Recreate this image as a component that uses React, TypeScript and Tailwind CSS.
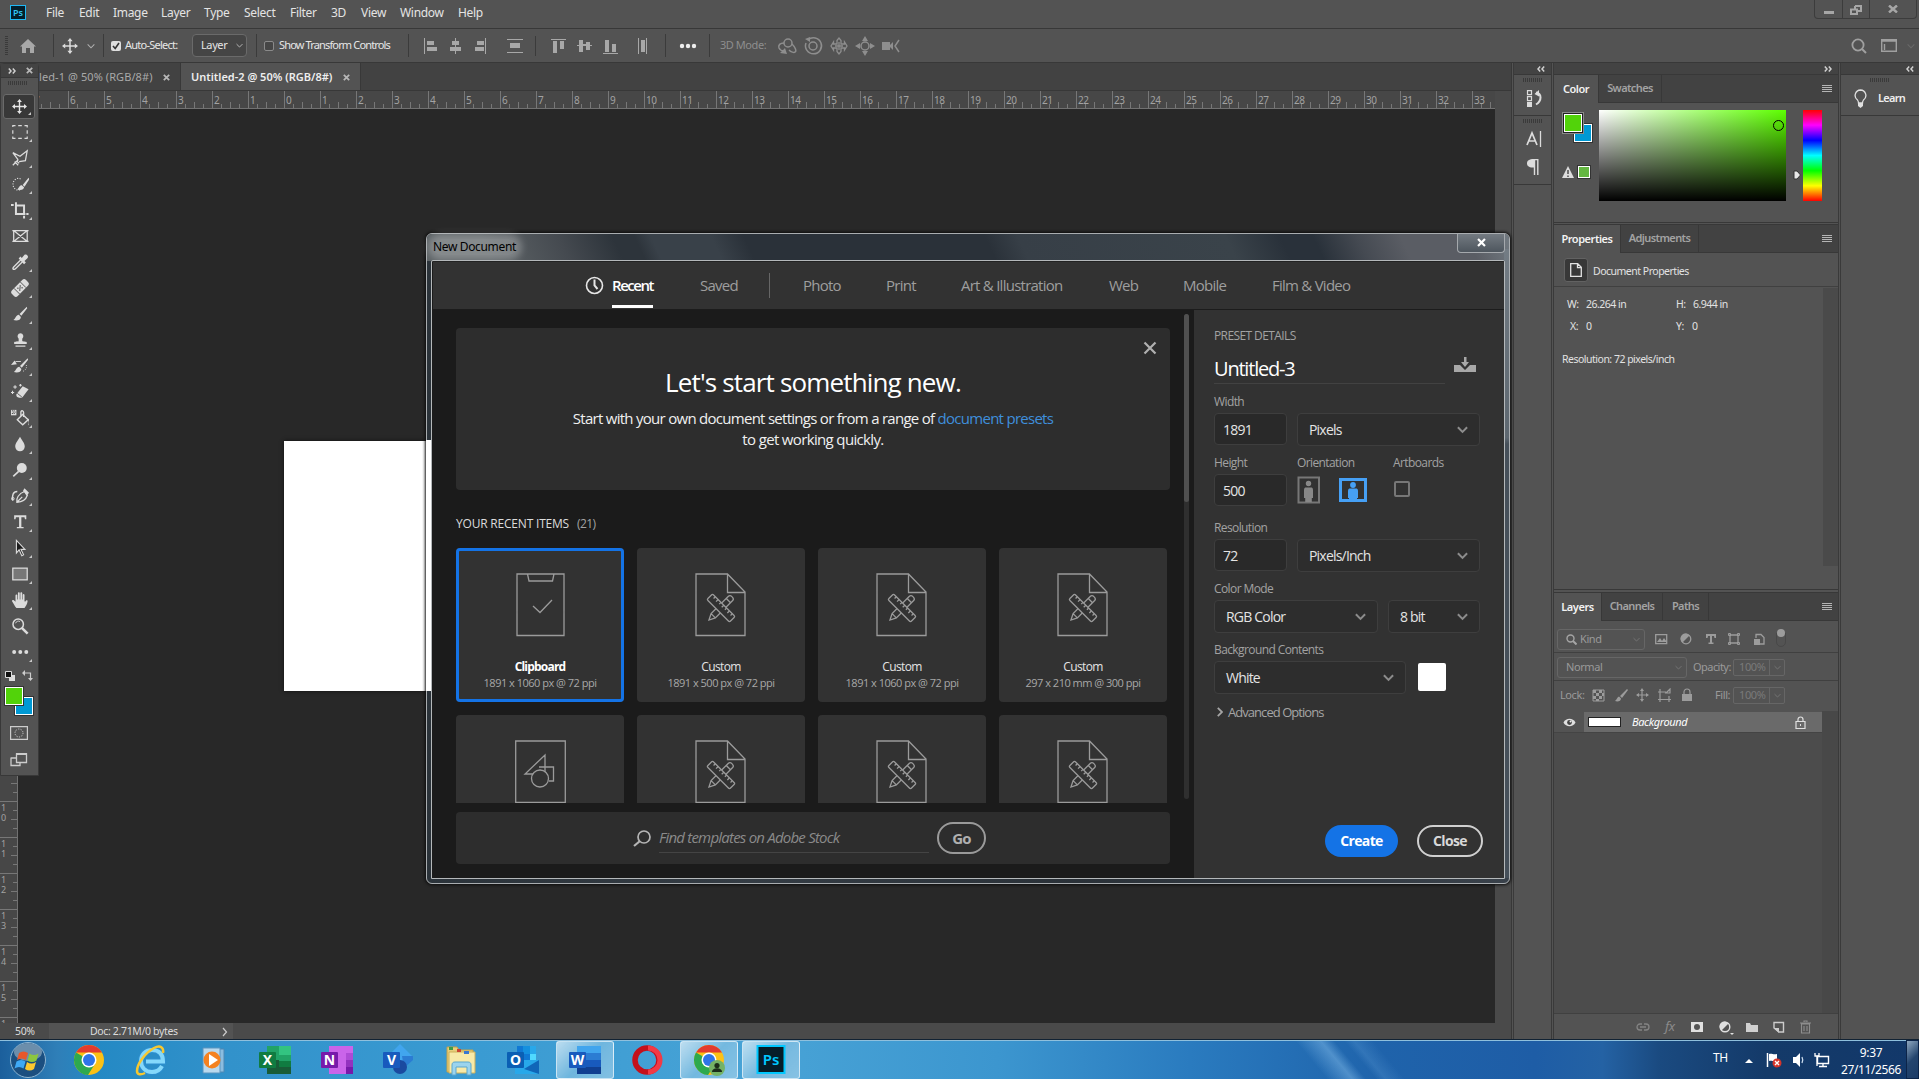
import React from "react";

type Kids = { children?: React.ReactNode };

const Svg = ({ w, h, vb, cls = "", children }: { w: number; h: number; vb?: string; cls?: string } & Kids) => (
  <svg width={w} height={h} viewBox={vb ?? `0 0 ${w} ${h}`} className={"block shrink-0 " + cls} fill="none">
    {children}
  </svg>
);

/* ---------- shared bits ---------- */
const Grip = () => (
  <div className="flex h-1 w-[19px] gap-px">
    {Array.from({ length: 10 }, (_, i) => (
      <span key={i} className="h-1 w-px bg-[#3a3a3a]" />
    ))}
  </div>
);
const Arrows = ({ left }: { left?: boolean }) => (
  <Svg w={8} h={6} cls={left ? "rotate-180" : ""}>
    <path d="M.8.6 3 3 .8 5.4M4.8.6 7 3 4.8 5.4" stroke="#d0d0d0" strokeWidth="1.5" />
  </Svg>
);
const Chevron = ({ c = "#a0a0a0", s = 10, sw = 1.3 }: { c?: string; s?: number; sw?: number }) => (
  <Svg w={s} h={s} vb="0 0 10 10">
    <path d="M.8 3 5 7.2 9.2 3" stroke={c} strokeWidth={sw} />
  </Svg>
);
const MoveGlyph = ({ c = "#dcdcdc", s = 16 }: { c?: string; s?: number }) => (
  <Svg w={s} h={s} vb="0 0 16 16">
    <path d="M8 2v12M2 8h12" stroke={c} strokeWidth="1.5" />
    <path d="M8 0l2.6 3.2H5.4zM8 16l2.6-3.2H5.4zM0 8l3.2-2.6v5.2zM16 8l-3.2-2.6v5.2z" fill={c} />
  </Svg>
);
const Burger = () => (
  <div className="flex w-[10px] flex-col gap-px">
    <span className="h-px bg-[#b5b5b5]" />
    <span className="h-px bg-[#b5b5b5]" />
    <span className="h-px bg-[#b5b5b5]" />
    <span className="h-px bg-[#b5b5b5]" />
  </div>
);

/* ---------- menu + options ---------- */
const MenuBar = () => (
  <div className="flex h-[29px] shrink-0 items-start border-b border-[#383838] bg-[#535353]">
    <div className="mt-[5px] ml-[10px] flex h-[15px] w-4 items-center justify-center border border-[#1fb8f5] bg-[#031e2b] text-[9px] leading-none font-semibold text-[#31c5f4]">
      Ps
    </div>
    <div className="ml-5 flex h-[25px] items-center text-[12px] tracking-[-0.3px] whitespace-nowrap text-[#e4e4e4]">
      <span className="w-[33px]">File</span>
      <span className="w-[34px]">Edit</span>
      <span className="w-[48px]">Image</span>
      <span className="w-[43px]">Layer</span>
      <span className="w-[40px]">Type</span>
      <span className="w-[46px]">Select</span>
      <span className="w-[41px]">Filter</span>
      <span className="w-[30px]">3D</span>
      <span className="w-[39px]">View</span>
      <span className="w-[58px]">Window</span>
      <span>Help</span>
    </div>
    <div className="mr-[2px] ml-auto flex h-[19px] w-[103px] rounded-b border border-t-0 border-[#3c3c3c]">
      <div className="flex w-7 justify-center border-r border-[#3c3c3c] pt-[11px]">
        <span className="h-[3px] w-[10px] bg-[#a6a6a6]" />
      </div>
      <div className="flex w-[27px] justify-center border-r border-[#3c3c3c] pt-[5px]">
        <Svg w={12} h={10}>
          <path d="M5 1h6v5H8M5 1v3M1 4.5h6V9H1z" stroke="#a6a6a6" strokeWidth="2" />
        </Svg>
      </div>
      <div className="flex flex-1 justify-center pt-[5px]">
        <Svg w={10} h={8}>
          <path d="M1 .5 9 7.5M9 .5 1 7.5" stroke="#a6a6a6" strokeWidth="2.4" />
        </Svg>
      </div>
    </div>
  </div>
);

const Sep = ({ cls = "" }: { cls?: string }) => <span className={"h-[23px] w-px shrink-0 bg-[#3b3b3b] " + cls} />;

const OptionsBar = () => (
  <div className="flex h-[34px] shrink-0 items-center border-b border-[#383838] bg-[#535353] text-[11px] tracking-[-0.75px] whitespace-nowrap text-[#e6e6e6]">
    <div className="ml-[5px] flex w-[3px] flex-col gap-px">
      {Array.from({ length: 10 }, (_, i) => (
        <span key={i} className="h-px bg-[#3a3a3a]" />
      ))}
    </div>
    <Svg w={18} h={16} cls="ml-[11px]">
      <path d="M9 1 17 8.5h-2V15h-4v-5H7v5H3V8.500H1z" fill="#a8a8a8" />
    </Svg>
    <Sep cls="ml-[16px]" />
    <div className="ml-[8px]">
      <MoveGlyph />
    </div>
    <div className="ml-[9px]">
      <Chevron c="#b0b0b0" s={8} />
    </div>
    <Sep cls="ml-[8px]" />
    <div className="ml-[7px] flex h-[10px] w-[10px] items-center justify-center rounded-[2px] bg-[#dedede]">
      <Svg w={8} h={8}>
        <path d="M1 4l2.200 2.500L7 1" stroke="#333" strokeWidth="1.600" />
      </Svg>
    </div>
    <span className="ml-[4px] w-[67px]">Auto-Select:</span>
    <div className="flex h-[23px] w-[55px] items-center rounded border border-[#6a6a6a] bg-[#454545] pl-2">
      <span className="flex-1 tracking-[-0.4px]">Layer</span>
      <div className="mr-[3px]">
        <Chevron c="#c0c0c0" s={7} />
      </div>
    </div>
    <Sep cls="ml-[9px]" />
    <span className="ml-[7px] h-[10px] w-[10px] rounded-[2px] border border-[#8a8a8a] bg-[#464646]" />
    <span className="ml-[5px] w-[129px] tracking-[-0.85px]">Show Transform Controls</span>
    <Sep />
    <Svg w={226} h={20} cls="ml-[12px]">
      <g fill="#a8a8a8">
        <path d="M3 2h1v16H3zM6 5h7v4H6zM6 11h10v4H6zM34 2h1v3h3v4h-3v2h5v4h-5v3h-1v-3h-5v-4h5V9h-3V5h3zM64 2h1v16h-1zM56 5h7v4h-7zM54 11h9v4h-9zM86 3h16v1H86zM89 7h10v5H89zM86 16h16v1H86zM130 3h15v1h-15zM132 5h4v12h-4zM139 5h4v8h-4zM158 4h4v4h3V6h4v3h2v1h-2v4h-4V10h-3v6h-4v-6h-2V9h2zM182 17h15v1h-15zM184 4h4v12h-4zM191 8h4v8h-4zM217 2h1v16h-1zM220 4h4v12h-4zM225 2h1v16h-1z" />
      </g>
      <path d="M114.500 0v20" stroke="#3b3b3b" />
    </Svg>
    <Sep cls="ml-[18px]" />
    <Svg w={18} h={6} cls="ml-[13px]">
      <g fill="#ededed">
        <circle cx="3" cy="3" r="2.200" />
        <circle cx="9" cy="3" r="2.200" />
        <circle cx="15" cy="3" r="2.200" />
      </g>
    </Svg>
    <Sep cls="ml-[12px]" />
    <span className="ml-[10px] w-[56px] tracking-[-0.45px] text-[#8e8e8e]">3D Mode:</span>
    <Svg w={126} h={20}>
      <g stroke="#8e8e8e" strokeWidth="1.500">
        <circle cx="12" cy="7" r="4" />
        <path d="M8 7c-4 0-6 2-5 5 1 2 3 3 5 3M16 8c3 3 5 7 3 8-1 1-4 0-6-2" />
        <circle cx="37" cy="10" r="4" />
        <path d="M32 4a8 8 0 1 1-2 3" />
        <path d="M61 4.500 63 2l2 2.500V8h3.500V6L71 10l-2.500 4v-2H65v3.500L63 18l-2-2.500V12h-3.500v2L55 10l2.500-4v2H61z" strokeWidth="1.300" />
        <path d="M63 6v8M59 10h8" strokeWidth="1.300" />
        <circle cx="89" cy="10" r="4" />
        <path d="M123 4l-4 6 4 6" />
      </g>
      <g fill="#8e8e8e">
        <path d="M4 17l5-5 2 6zM29 3l5-2v5zM89 0l3 5h-6zM89 20l3-5h-6zM79 10l5-3v6zM99 10l-5-3v6zM106 6h8v8h-8zM113 10l4-4v8z" />
      </g>
    </Svg>
    <div className="mr-[4px] ml-auto flex items-center">
      <Svg w={16} h={16}>
        <circle cx="7" cy="7" r="5.600" stroke="#a0a0a0" strokeWidth="1.800" />
        <path d="M11 11l4 4" stroke="#a0a0a0" strokeWidth="2" />
      </Svg>
      <Svg w={16} h={13} cls="ml-[14px]">
        <path d="M.7.7h14.600v11.600H.7zM0 2h16M3.500 5v6" stroke="#a0a0a0" strokeWidth="1.400" />
      </Svg>
      <div className="ml-[10px]">
        <Chevron c="#6a6a6a" s={8} />
      </div>
    </div>
  </div>
);

/* ---------- document area ---------- */
const Ruler = () => (
  <div className="relative h-[18px] shrink-0 overflow-hidden border-b border-[#717171] bg-[#474747]">
    <div className="absolute top-0 left-[32px] flex h-[17px]">
      {Array.from({ length: 41 }, (_, i) => (
        <div key={i} className="flex w-9 items-end border-l border-[#777]">
          <span className="w-0 self-start overflow-visible pt-[2px] pl-px text-[10px] leading-[15px] tracking-[-0.4px] whitespace-nowrap text-[#a2a2a2]">
            {Math.abs(i - 7)}
          </span>
          <span className="ml-[7px] h-1 w-px bg-[#777]" />
          <span className="ml-2 h-[6px] w-px bg-[#777]" />
          <span className="ml-2 h-1 w-px bg-[#777]" />
        </div>
      ))}
    </div>
  </div>
);

const VRuler = () => (
  <div className="flex h-full w-[18px] shrink-0 flex-col overflow-hidden border-r border-[#717171] bg-[#474747] pt-[656px]">
    {["9 ", "10", "11", "12", "13", "14", "15", "1 "].map((n, i) => (
      <div key={i} className="relative flex h-9 shrink-0 flex-col items-start border-t border-[#777] pt-px pl-px text-[9px] leading-[10px] text-[#a2a2a2]">
        <span>{n[0]}</span>
        <span>{n[1]}</span>
        <span className="absolute top-2 right-0 h-px w-1 bg-[#777]" />
        <span className="absolute top-[17px] right-0 h-px w-[6px] bg-[#777]" />
        <span className="absolute top-[26px] right-0 h-px w-1 bg-[#777]" />
      </div>
    ))}
  </div>
);

const CloseX = ({ c = "#b8b8b8", s = 7 }: { c?: string; s?: number }) => (
  <Svg w={s} h={s} vb="0 0 7 7">
    <path d="M.8.8l5.400 5.400M6.200.8.8 6.200" stroke={c} strokeWidth="1.700" />
  </Svg>
);

const DocumentArea = () => (
  <div className="flex w-[1512px] shrink-0 flex-col border-r border-[#383838] bg-[#4a4a4a]">
    <div className="flex h-[28px] shrink-0 items-center border-b border-[#383838] bg-[#424242] text-[11px] whitespace-nowrap">
      <div className="flex h-full w-[181px] items-center border-r border-[#383838] pt-[2px] pl-[39px] text-[#a9a9a9]">
        <span className="w-[124px] tracking-[0.080px]">led-1 @ 50% (RGB/8#)</span>
        <CloseX />
      </div>
      <div className="flex h-full w-[180px] items-center border-r border-[#383838] bg-[#535353] pt-[2px] pl-[10px] font-semibold text-[#eee]">
        <span className="w-[152px]">Untitled-2 @ 50% (RGB/8#)</span>
        <CloseX />
      </div>
    </div>
    <div className="w-[1495px]">
      <Ruler />
    </div>
    <div className="flex h-[914px] shrink-0">
      <VRuler />
      <div className="w-[1477px] bg-[#282828] pt-[332px] pl-[266px]">
        <div className="h-[250px] w-[946px] bg-white shadow-[0_0_4px_#111]" />
      </div>
      <div className="flex-1 bg-[#4a4a4a]" />
    </div>
    <div className="flex h-4 shrink-0 items-center bg-[#4a4a4a] text-[10.500px] tracking-[-0.35px] whitespace-nowrap text-[#dcdcdc]">
      <span className="w-[49px] pt-px pl-[15px]">50%</span>
      <div className="flex h-full w-[184px] items-center bg-[#535353] pt-px pl-[41px]">
        <span className="w-[132px]">Doc: 2.71M/0 bytes</span>
        <Svg w={6} h={10}>
          <path d="M1 1l3.500 4L1 9" stroke="#ccc" strokeWidth="1.200" />
        </Svg>
      </div>
    </div>
  </div>
);

/* ---------- toolbar ---------- */
const G = "#dcdcdc";
const tools: { d: React.ReactNode; tri?: boolean }[] = [
  { d: <path d="M2 4.500V3h3M8 3h4M15 3h3v2M18 8v4M18 15v2h-3M12 17H8M5 17H2v-2M2 12V8" stroke={G} strokeWidth="1.300" /> },
  { d: <path d="M2 4l8 4 8-6-2 11-7 1M2 4l6 8M8 12l-6 6M4 14l4 4M6 13l3 3" stroke={G} strokeWidth="1.400" /> },
  { d: <><path d="M10 16.500a6 6.500 0 1 1 1-12" stroke={G} strokeDasharray="1.300 1.500" strokeWidth="1.200" /><path d="M19.500 3l-6.500 8 2 2 5.500-8.500zM12 11.500c-3 0-3 3-5 4.500 4 1.500 7.500 0 7.500-2.500z" fill={G} /></> },
  { d: <path d="M0 4.500h3M5.500 1.500v13H16M5 5h9.500v10M14.500 16.500v3M17 14.500h2.500" stroke={G} strokeWidth="2.200" /> },
  { d: <path d="M3 4h15v12H3zM3 4l15 12M18 4 3 16M1.500 4h3M16.500 4h3M1.500 16h3M16.500 16h3" stroke={G} strokeWidth="1.400" />, tri: false },
  { d: <><path d="M11 7.500 3.500 15c-1 1-1.500 2.500-1 3 .5.500 2 0 3-1l7.500-7.500" stroke={G} strokeWidth="1.500" /><path d="M8.500 6l2-2 1.500 1.500 3-3.500c2-1.500 5 1.500 3.500 3.500L15 9l1.500 1.500-2 2z" fill={G} /></> },
  { d: <g transform="rotate(-45 10 10)"><rect x="-1" y="5.500" width="22" height="9" rx="3" fill={G} /><path d="M5 5.500v9M15 5.500v9" stroke="#535353" /><path d="M7.500 8.500H9M11 8.500h1.500M9.200 10h1.600M7.500 11.500H9M11 11.500h1.500" stroke="#535353" strokeWidth="1.500" /></g> },
  { d: <path d="M17.500 2 9.500 10l2 2L18 3.500zM8.700 10.800c-3.200.2-3.200 3.700-6 6 4 1.200 8.300 0 8.300-3.500z" fill={G} /> },
  { d: <path d="M10.500 2.500a3.400 3.400 0 0 1 2 6V11c0 .6 5 .5 5 1.500v2h-14v-2c0-1 5-.9 5-1.500V8.500a3.400 3.400 0 0 1 2-6zM5 16.200h11v1.300H5z" fill={G} /> },
  { d: <><path d="M18.500 1.500 10 10l2 2 7-9zM9.200 10.800c-3.200.2-3.200 3.700-6 6 4 1.200 8.300 0 8.300-3.500zM0 9l4-5 2.500 4z" fill={G} /><path d="M5 5h6" stroke={G} /><path d="M17 9c1 3-1 6-4 7" stroke={G} strokeDasharray="1 1.500" /></> },
  { d: <><path d="M13 3.500 19.500 7 13 15.500c-2 2-8 1-7-3z" fill={G} /><path d="M7 11.500l5 4" stroke="#535353" /><path d="M2.500 4.500h4M4.500 2.500v4M9 2.500h3M10.500 1v3M0 10.500h3.500M1.700 8.700v3.500" stroke={G} strokeWidth="1.200" /></> },
  { d: <><path d="M7 12l6-6 6 6-6 5.500zM11 9V3c1-2 3-1 3 1v5M18 11c2 1 3 4 2 7" stroke={G} strokeWidth="1.500" /><path d="M0 1h6v6H0z" fill={G} /><path d="M1 2h1M3 2h1M2 3.500h1M4 3.500h1M1 5h1M3 5h1" stroke="#222" /></> },
  { d: <path d="M10 2c2 4 5.300 7 5.300 10.800a5.300 5.300 0 0 1-10.600 0C4.700 9 8 6 10 2z" fill={G} /> },
  { d: <><circle cx="12" cy="7.800" r="5.500" fill={G} /><path d="M8.500 11.500 2.500 17" stroke={G} strokeWidth="1.800" /></> },
  { d: <><path d="M6.500 17c-1-4 2-10 8.500-12l3 4.500c-1.500 5-5.500 7-11.500 7.500zM6.500 17l6-6M14 4l4.500 5.500" stroke={G} strokeWidth="1.400" /><path d="M7 5C2 5 1 10 2 15" stroke={G} strokeWidth="1.600" /><circle cx="2" cy="13" r="1.500" stroke={G} /><path d="M15 1.500l5 5-2 2.500-4.500-5z" fill={G} /></> },
  { d: <path d="M3.500 2.500h13.500v4.500h-1.500L15 4.800h-3.500v10.700H14V17H6.500v-1.500H9V4.800H5.500L5 7H3.500z" fill={G} /> },
  { d: <path d="M6 1.500v14l3-3.500 3 6.500 2-1-3-6h4.500z" fill="#1c1c1c" stroke={G} strokeWidth="1.200" /> },
  { d: <rect x="2" y="3.500" width="16" height="13" fill="#777" stroke={G} strokeWidth="1.400" /> },
  { d: <path d="M6 19c-1.500-2-3.500-5.500-5-8 .5-1.500 2.200-1 4 1V5c0-1.400 2-1.400 2 0v4.500h.7V2.500c0-1.500 2-1.500 2 0v7h.7V2.500c0-1.500 2.100-1.500 2.100 0v7h.6V4.500c0-1.400 1.900-1.400 1.900 0v7l.8.500c.3-2 3-2.500 2.600-.5-.3 3-1.900 5.500-3.400 7.500z" fill={G} /> },
  { d: <><circle cx="8" cy="8" r="5.800" stroke={G} strokeWidth="1.700" /><path d="M12 12l6.500 6.500" stroke={G} strokeWidth="2.800" /><path d="M5 7a3.500 3.500 0 0 1 5-2" stroke={G} /></>, tri: false },
  { d: <><circle cx="3.500" cy="10" r="2.200" fill={G} /><circle cx="10.300" cy="10" r="2.200" fill={G} /><circle cx="17" cy="10" r="2.200" fill={G} /></> },
];

const Corner = () => (
  <Svg w={3} h={3} cls="absolute right-[6px] bottom-[3px]">
    <path d="M3 0v3H0z" fill="#c8c8c8" />
  </Svg>
);

const Toolbar = () => (
  <div className="absolute top-[63px] left-0 flex h-[713px] w-[39px] flex-col items-center rounded-t border border-[#383838] bg-[#535353]">
    <div className="flex h-[14px] w-full shrink-0 items-center justify-between border-b border-[#383838] bg-[#434343] pr-[5px] pl-[7px]">
      <Arrows />
      <CloseX />
    </div>
    <div className="mt-[3px] mr-[5px]">
      <Grip />
    </div>
    <div className="relative mt-[9px] ml-[2px] flex h-[25px] w-[32px] shrink-0 items-center justify-center self-start rounded-[3px] border border-[#6a6a6a] bg-[#383838]">
      <MoveGlyph c="#e6e6e6" s={15} />
      <Svg w={3} h={3} cls="absolute right-[3px] bottom-[3px]">
        <path d="M3 0v3H0z" fill="#c8c8c8" />
      </Svg>
    </div>
    {tools.map((t, i) => (
      <div key={i} className="relative flex h-[26px] w-full shrink-0 items-center justify-center">
        <Svg w={18} h={18} vb="0 0 20 20">
          {t.d}
        </Svg>
        {t.tri !== false && <Corner />}
      </div>
    ))}
    <div className="flex h-[21px] w-full shrink-0 items-center gap-[7px] pl-[4px]">
      <Svg w={10} h={10}>
        <path d="M4 4h6v6H4z" fill={G} />
        <path d="M.5.5h6v6h-6z" fill="#111" stroke="#ddd" />
      </Svg>
      <Svg w={11} h={11}>
        <path d="M2 3h6.500V9" stroke="#ccc" strokeWidth="1.200" />
        <path d="M0 3l3-3v6zM8.500 11l-2.500-3h5z" fill="#ccc" />
      </Svg>
    </div>
    <div className="relative h-[32px] w-full shrink-0">
      <div className="absolute top-[10px] left-[13px] h-[20px] w-[20px] border border-[#333] bg-white p-px">
        <div className="h-full bg-[#0099d4]" />
      </div>
      <div className="absolute top-0 left-[3px] h-[20px] w-[20px] border border-[#333] bg-white p-px">
        <div className="h-full bg-[#52d30a]" />
      </div>
    </div>
    <Svg w={18} h={14} cls="mt-[8px] mr-px">
      <path d="M.6.6h16.800v12.800H.6z" stroke="#ccc" strokeWidth="1.200" />
      <circle cx="9" cy="7" r="4" stroke="#ccc" strokeDasharray="1.200 1.300" />
    </Svg>
    <Svg w={18} h={14} cls="mt-[13px] mr-px">
      <path d="M6.500 1h10v8.500h-10zM1 5h5M1 4.500v8h9v-3" stroke="#ccc" strokeWidth="1.300" />
      <path d="M6 1h11" stroke="#ccc" strokeWidth="2" />
    </Svg>
  </div>
);

/* ---------- right docks ---------- */
const IconDock = () => (
  <div className="ml-px flex w-[39px] shrink-0 flex-col border-r border-l border-[#3a3a3a] bg-[#535353]">
    <div className="flex h-[12px] shrink-0 items-center justify-end border-b border-[#383838] bg-[#434343] pr-[6px]">
      <Arrows left />
    </div>
    <div className="flex h-[41px] flex-col items-center border-b border-[#383838] pt-[3px]">
      <Grip />
      <Svg w={16} h={18} cls="mt-[8px] ml-[2px]">
        <path d="M1.500.700h4v4h-4zM1.500 6.700h4v4h-4z" stroke={G} strokeWidth="1.200" />
        <path d="M1 12h5v5H1zM8.500 4 13 0v6.500z" fill={G} />
        <path d="M10 2.500c6 1 6 8 0 12" stroke={G} strokeWidth="2" />
      </Svg>
    </div>
    <div className="flex h-[69px] flex-col items-center border-b border-[#383838] pt-[3px]">
      <Grip />
      <Svg w={16} h={18} cls="mt-[7px] ml-[2px]">
        <path d="M1 15 6 3l5 12M3 11h6" stroke={G} strokeWidth="1.700" />
        <path d="M14.500 1v16" stroke={G} strokeWidth="1.300" />
      </Svg>
      <Svg w={12} h={16} cls="mt-[11px] ml-px">
        <path d="M6 .5h5.500M7.500 0v16M10.800 0v16" stroke={G} strokeWidth="1.400" />
        <path d="M7 0v8.500C2 9 0 7 0 4.300S2 0 7 0z" fill={G} />
      </Svg>
    </div>
  </div>
);

const Tabs = ({ items }: { items: [string, string][] }) => (
  <div className="flex h-[28px] shrink-0 bg-[#424242] text-[11px] font-semibold whitespace-nowrap">
    {items.map(([t, w], i) => (
      <div
        key={t}
        className={
          "flex h-full items-center justify-center border-r border-[#383838] " +
          w +
          (i === 0 ? " bg-[#535353] tracking-[-0.45px] text-[#f2f2f2]" : " border-b tracking-[-0.6px] text-[#a3a3a3]")
        }
      >
        {t}
      </div>
    ))}
    <div className="flex flex-1 items-center justify-end border-b border-[#383838] pr-[6px]">
      <Burger />
    </div>
  </div>
);

const ColorPanel = () => (
  <div className="flex h-[148px] shrink-0 flex-col border-b border-[#383838]">
    <Tabs items={[["Color", "w-[45px]"], ["Swatches", "w-[63px]"]]} />
    <div className="flex pt-[7px]">
      <div className="relative h-[92px] w-[45px]">
        <div className="absolute top-[13px] left-[19px] h-[20px] w-[20px] border border-[#333] bg-white p-px">
          <div className="h-full bg-[#0099d4]" />
        </div>
        <div className="absolute top-[2px] left-[8px] h-[22px] w-[22px] border border-[#8a8a8a] bg-[#222] p-px">
          <div className="h-full border border-white bg-[#52d30a]" />
        </div>
        <Svg w={12} h={12} cls="absolute top-[56px] left-[8px]">
          <path d="M6 0l6 12H0z" fill="#ddd" />
          <path d="M6 4v4M6 9.500V11" stroke="#444" strokeWidth="1.400" />
        </Svg>
        <div className="absolute top-[55px] left-[23px] h-[14px] w-[14px] border border-[#333] bg-white p-px">
          <div className="h-full bg-[#64b741]" />
        </div>
      </div>
      <div className="relative h-[91px] w-[187px] bg-[linear-gradient(to_bottom,transparent,#000),linear-gradient(to_right,#fff,#5dff00)]">
        <span className="absolute top-[10px] left-[174px] h-[11px] w-[11px] rounded-full border border-black" />
      </div>
      <div className="flex w-[17px] justify-end">
        <Svg w={8} h={10} cls="mt-[60px] mr-[2px]">
          <path d="M1 1h3l3.500 4L4 9H1z" fill="#e8e8e8" stroke="#333" />
        </Svg>
      </div>
      <div className="h-[91px] w-[19px] bg-[linear-gradient(to_bottom,#f00,#f0f,#00f,#0ff,#0f0,#ff0,#f00)]" />
    </div>
  </div>
);

const PropertiesPanel = () => (
  <div className="mt-px flex h-[366px] shrink-0 flex-col border-t border-b border-[#383838] text-[10.500px] tracking-[-0.5px] whitespace-nowrap text-[#e2e2e2]">
    <Tabs items={[["Properties", "w-[67px]"], ["Adjustments", "w-[78px]"]]} />
    <div className="flex h-[34px] shrink-0 items-center border-b border-[#404040] pl-[10px]">
      <div className="flex h-6 w-6 items-center justify-center rounded-[3px] border border-[#626262] bg-[#383838]">
        <Svg w={12} h={14}>
          <path d="M.7.7h7l3.600 3.600v9H.7zM7.500.700v4h4" stroke="#e2e2e2" strokeWidth="1.300" />
        </Svg>
      </div>
      <span className="ml-[5px] pt-[5px]">Document Properties</span>
    </div>
    <div className="flex flex-1 justify-between pt-px">
      <div className="pt-[6px] pl-[8px]">
        <div className="flex h-[22px] items-center">
          <span className="w-[24px] pl-[5px]">W:</span>
          <span className="w-[90px]">26.264 in</span>
          <span className="w-[17px]">H:</span>
          <span>6.944 in</span>
        </div>
        <div className="flex h-[22px] items-center">
          <span className="w-[24px] pl-[8px]">X:</span>
          <span className="w-[90px]">0</span>
          <span className="w-[16px]">Y:</span>
          <span>0</span>
        </div>
        <div className="flex h-[44px] items-center">Resolution: 72 pixels/inch</div>
      </div>
      <div className="h-[278px] w-[15px] bg-[#4a4a4a]" />
    </div>
  </div>
);

const Drop = ({ t, w }: { t: string; w: string }) => (
  <div className={"flex h-[21px] items-center rounded-[3px] border border-[#666] pr-[4px] pl-[8px] " + w}>
    <span className="flex-1">{t}</span>
    <Chevron c="#777" s={7} />
  </div>
);
const Pct = () => (
  <div className="flex h-[17px] w-[52px] items-center rounded-[2px] border border-[#666] text-[#7a7a7a]">
    <span className="w-[35px] pl-[5px]">100%</span>
    <span className="h-full w-px bg-[#666]" />
    <div className="pl-[4px]">
      <Chevron c="#777" s={7} />
    </div>
  </div>
);

const LayersPanel = () => (
  <div className="mt-[2px] flex flex-1 flex-col border-t border-[#383838] text-[11px] tracking-[-0.4px] whitespace-nowrap text-[#9a9a9a]">
    <Tabs items={[["Layers", "w-[48px]"], ["Channels", "w-[61px]"], ["Paths", "w-[46px]"]]} />
    <div className="flex h-[32px] shrink-0 items-center border-b border-[#404040] pt-[5px] pl-[3px]">
      <div className="flex h-[21px] w-[88px] items-center rounded-[3px] border border-[#666] pr-[4px] pl-[8px]">
        <Svg w={11} h={11}>
          <circle cx="4.500" cy="4.500" r="3.500" stroke="#a5a5a5" strokeWidth="1.400" />
          <path d="M7 7l3.500 3.500" stroke="#a5a5a5" strokeWidth="2" />
        </Svg>
        <span className="ml-[3px] flex-1">Kind</span>
        <Chevron c="#777" s={7} />
      </div>
      <Svg w={132} h={22} cls="ml-[10px]">
        <g fill="#9c9c9c">
          <path d="M2 14l3-4 2 3 2-3 3 4z" />
          <path d="M51 6h10v4h-1.500L59 8h-2v6.500h1.500V16h-5v-1.500H55V8h-2l-.5 2H51zM99 11h6v6h-6z" />
          <circle cx="126" cy="5" r="4" />
          <path d="M34.500 7.500a5 5 0 1 0-7 7z" />
        </g>
        <circle cx="31" cy="11" r="4.800" stroke="#9c9c9c" strokeWidth="1.300" />
        <path d="M.7 6.700h11v9h-11zM75 7h8v8h-8zM101 10V6.500h5l3 3V16h-4" stroke="#9c9c9c" strokeWidth="1.300" />
        <path d="M73.500 5.500h2v2h-2zM82.500 5.500h2v2h-2zM73.500 14.500h2v2h-2zM82.500 14.500h2v2h-2z" stroke="#9c9c9c" />
        <path d="M121.500 5v9a4.500 4.500 0 0 0 9 0V5" stroke="#484848" strokeWidth="1" />
      </Svg>
    </div>
    <div className="flex h-[28px] shrink-0 items-center border-b border-[#404040] pt-px pl-[3px]">
      <Drop t="Normal" w="w-[130px]" />
      <span className="ml-[6px] w-[40px] tracking-[-0.55px]">Opacity:</span>
      <Pct />
    </div>
    <div className="flex h-[30px] shrink-0 items-center pb-[2px] pl-[6px]">
      <span className="w-[32px]">Lock:</span>
      <Svg w={102} h={14}>
        <path d="M1 2h11v11H1z" stroke="#9c9c9c" />
        <g fill="#9c9c9c">
          <path d="M1 2h3v3H1zM7 2h3v3H7zM4 5h3v3H4zM10 5h2v3h-2zM1 8h3v3H1zM7 8h3v3H7zM4 11h3v2H4zM35 1l-7 7 2 2 6-8zM27 8.500c-2 .5-2 3-4 4.500 3 1 6 0 6-2.500zM90 6h10v7H90zM50 0l2 3h-4zM50 14l2-3h-4zM44 7l3-2v4zM57 7l-3-2v4z" />
        </g>
        <path d="M50 2v10M45 7h10M68 1v13M66 11.500h13M66 4h8M77 8v6M78 1v4h-4zM92 6V4a3 3 0 0 1 6 0v2" stroke="#9c9c9c" strokeWidth="1.200" />
      </Svg>
      <span className="ml-[21px] w-[18px]">Fill:</span>
      <Pct />
    </div>
    <div className="flex flex-1">
      <div className="flex flex-1 flex-col bg-[#4c4c4c]">
        <div className="flex h-[22px] items-center border-b border-[#444] bg-[#535353] pt-px">
          <div className="flex w-[30px] justify-center">
            <Svg w={13} h={9}>
              <path d="M.5 4.500C3-.5 10-.5 12.500 4.500 10 9.500 3 9.500.5 4.500z" fill="#e0e0e0" />
              <circle cx="6.500" cy="4.500" r="2.400" fill="#444" />
              <circle cx="7.500" cy="3.500" r="1" fill="#eee" />
            </Svg>
          </div>
          <div className="flex h-full flex-1 items-center bg-[#6a6a6a] pl-[4px] text-white">
            <div className="h-[10px] w-[33px] border border-[#222] bg-white" />
            <span className="ml-[11px] flex-1 italic">Background</span>
            <Svg w={11} h={13} cls="mr-[16px]">
              <path d="M1 5.500h9v7H1zM3 5.500V3.500a2.500 2.500 0 0 1 5 0v2" stroke="#e0e0e0" strokeWidth="1.200" />
              <path d="M5 8h1v2H5z" fill="#e0e0e0" />
            </Svg>
          </div>
        </div>
      </div>
      <div className="w-[16px] bg-[#484848]" />
    </div>
    <div className="flex h-[26px] shrink-0 items-center justify-end border-t border-[#404040] pr-[27px]">
      <Svg w={176} h={16}>
        <path d="M7 5H5a3 3 0 0 0 0 6h2M9 5h2a3 3 0 0 1 0 6H9M5 8h6" stroke="#848484" strokeWidth="1.300" />
        <path d="M56 3h12v10H56z" fill="#e0e0e0" />
        <circle cx="62" cy="8" r="3" fill="#535353" />
        <circle cx="90" cy="8" r="4.800" stroke="#e0e0e0" strokeWidth="1.400" />
        <path d="M93.500 4.500a5 5 0 1 0-7 7z" fill="#e0e0e0" />
        <path d="M95 14l2 2 2-2z" fill="#e0e0e0" />
        <path d="M111 4h4l1 2h7v7h-12z" fill="#d0d0d0" />
        <path d="M139 9V3.500h9.500v9.500H144z" stroke="#ccc" strokeWidth="1.400" />
        <path d="M139 9h5v5z" fill="#ccc" />
        <path d="M166.500 5h8v9h-8zM165 4h11M169 3V2h3v1M169 7v5M172 7v5" stroke="#8e8e8e" strokeWidth="1.100" />
        <text x="30" y="12" fontSize="13" fontStyle="italic" fill="#8a8a8a">
          fx
        </text>
      </Svg>
    </div>
  </div>
);

const PanelDock = () => (
  <div className="ml-px flex w-[286px] shrink-0 flex-col border-r border-l border-[#3a3a3a] bg-[#535353]">
    <div className="flex h-[12px] shrink-0 items-center justify-end border-b border-[#383838] bg-[#434343] pr-[6px]">
      <Arrows />
    </div>
    <ColorPanel />
    <PropertiesPanel />
    <LayersPanel />
  </div>
);

const LearnDock = () => (
  <div className="ml-px flex flex-1 flex-col border-l border-[#3a3a3a] bg-[#535353]">
    <div className="flex h-[12px] shrink-0 items-center justify-end border-b border-[#383838] bg-[#434343] pr-[5px]">
      <Arrows left />
    </div>
    <div className="flex h-[41px] flex-col border-b border-[#383838] pt-[3px] pl-[13px] text-[11px] font-semibold tracking-[-0.7px] text-[#eee]">
      <div className="ml-[16px]">
        <Grip />
      </div>
      <div className="mt-[7px] flex items-center">
        <Svg w={13} h={19}>
          <path d="M6.500 1a5.500 5.500 0 0 1 3 10c-.7 1-1 2-1 3h-4c0-1-.3-2-1-3a5.500 5.500 0 0 1 3-10z" stroke="#e0e0e0" strokeWidth="1.300" />
          <path d="M4 14h5v3l-2.500 2L4 17z" fill="#e0e0e0" />
        </Svg>
        <span className="ml-[11px]">Learn</span>
      </div>
    </div>
  </div>
);

/* ---------- New Document dialog ---------- */
const DocIcon = () => (
  <Svg w={51} h={64} cls="mr-px">
    <path d="M1 1h31.500L50 19v43.500H1zM32.500 1v18.500H50" stroke="#9b9b9b" strokeWidth="1.300" />
    <g stroke="#9b9b9b" strokeWidth="1.300" transform="translate(26 35)">
      <g transform="rotate(45)">
        <path d="M-3-13.500c0-3 6-3 6 0V11L0 17l-3-6zM-3 11h6M-3-10.500h6" />
      </g>
      <g transform="rotate(-45)">
        <rect x="-4" y="-16" width="8" height="32" rx="1.500" fill="#323232" />
        <path d="M4-12H1.500M4-8H1M4-4H1.500M4 0H1M4 4H1.500M4 8H1M4 12H1.500" />
      </g>
    </g>
  </Svg>
);
const ClipIcon = () => (
  <Svg w={51} h={64}>
    <path d="M2 1h47v61.500H2zM12.500 1l1.500 7h23.500L39 1M18 33l7 6.500L37 27" stroke="#9b9b9b" strokeWidth="1.300" />
  </Svg>
);
const ShapesIcon = () => (
  <Svg w={51} h={64}>
    <path d="M.7 1h49.600v61.500H.7z" stroke="#9b9b9b" strokeWidth="1.300" />
    <path d="M30 15v19H10zM24 27h14.500v14H34" stroke="#9b9b9b" strokeWidth="1.300" />
    <circle cx="25" cy="38.500" r="8.500" fill="#323232" stroke="#9b9b9b" strokeWidth="1.300" />
  </Svg>
);

const Card = ({ icon, title, dims, on }: { icon: React.ReactNode; title: string; dims: string; on?: boolean }) => (
  <div
    className={
      "flex h-[154px] w-[168px] shrink-0 flex-col items-center rounded bg-[#323232] pt-[25px] whitespace-nowrap " +
      (on ? "shadow-[inset_0_0_0_3px_#1473e6]" : "")
    }
  >
    {icon}
    <span className={"mt-[22px] text-[12px] leading-4 " + (on ? "font-bold tracking-[-0.8px] text-white" : "font-medium tracking-[-0.6px] text-[#e4e4e4]")}>{title}</span>
    <span className="text-[11px] leading-4 tracking-[-0.5px] text-[#a8a8a8]">{dims}</span>
  </div>
);

const Field = ({ v }: { v: string }) => (
  <div className="mr-[10px] flex h-[32px] w-[73px] items-center rounded border border-[#3e3e3e] bg-[#292929] pl-2 text-[14px] tracking-[-0.750px] text-[#e4e4e4]">{v}</div>
);
const Select = ({ v, w }: { v: string; w: string }) => (
  <div className={"flex h-[33px] items-center rounded border border-[#3e3e3e] bg-[#2d2d2d] pr-[11px] pl-[11px] text-[14px] tracking-[-0.8px] text-[#e4e4e4] " + w}>
    <span className="flex-1">{v}</span>
    <Chevron c="#8c8c8c" s={11} sw={1.8} />
  </div>
);
const Label = ({ children, w = "" }: { w?: string } & Kids) => (
  <span className={"block text-[12px] leading-4 tracking-[-0.6px] text-[#a2a2a2] " + w}>{children}</span>
);

const navItems: [string, string][] = [
  ["Photo", "w-[83px]"],
  ["Print", "w-[75px]"],
  ["Art & Illustration", "w-[148px]"],
  ["Web", "w-[74px]"],
  ["Mobile", "w-[89px]"],
  ["Film & Video", ""],
];

const Dialog = () => (
  <div className="absolute top-[233px] left-[426px] flex h-[651px] w-[1084px] flex-col rounded-[6px] border border-[#a9adb0] bg-[linear-gradient(to_right,#2b333a,#343c44_30%,#2a3138_60%,#39414a)] p-[5px] pt-0 shadow-[0_0_3px_1px_#0c0c0c] [font-family:'Open_Sans','Noto_Sans',sans-serif]">
    <div className="absolute inset-x-0 top-0 h-[27px] rounded-t-[5px] bg-[linear-gradient(65deg,#5d6366_0%,#5d6366_6%,#454a50_13%,#2d343b_18%,#2d343b_20%,#394149_21.500%,#394149_27%,#2a3139_30%,#2a3139_52%,#373f47_55%,#3a434a_74%,#29313a_79%,#29313a_82%,#454a52_86%,#5a5d64_90%,#5a5d64_96%,#737b82)]" />
    <div className="absolute top-[206px] bottom-[192px] left-[-1px] w-[6px] bg-white" />
    <div className="absolute top-[15px] right-0 bottom-[5px] w-[5px] bg-[linear-gradient(to_bottom,#737c84,#5d6770_30%,#46505a_31%,#46505a)]" />
    <div className="relative flex h-[26px] shrink-0 justify-between">
      <div className="h-[25px] pt-[5px] pl-px">
        <span className="block w-[84px] rounded-full bg-white/25 text-[12px] leading-[16px] tracking-[-0.35px] whitespace-nowrap text-black shadow-[0_0_7px_5px_rgba(255,255,255,.25)] [font-family:'Noto_Sans',sans-serif]">
          New Document
        </span>
      </div>
      <div className="mr-[-1px] flex h-[19px] w-[48px] items-center justify-center rounded-b-[4px] border border-t-0 border-[#a5a9ad] bg-[linear-gradient(#737a81,#4e565e)] pb-px">
        <CloseX c="#fff" s={9} />
      </div>
    </div>
    <div className="relative mr-[-1px] mb-[-1px] ml-[-1px] flex flex-1 flex-col overflow-hidden rounded-t-[2px] border border-[#b4b8ba] bg-[#1b1b1b] pl-px">
      <div className="h-px shrink-0 bg-[#222]" />
      <div className="flex h-[48px] shrink-0 items-center border-b border-[#1c1c1c] bg-[#323232] pl-[152px] text-[15px] tracking-[-0.750px] whitespace-nowrap text-[#9e9e9e]">
        <Svg w={19} h={19}>
          <circle cx="9.500" cy="9.500" r="8" stroke="#e6e6e6" strokeWidth="1.600" />
          <path d="M9.500 3.500v6l3 3.500" stroke="#e6e6e6" strokeWidth="2" />
        </Svg>
        <div className="relative ml-[8px] flex h-full w-[88px] items-center font-semibold text-white">
          <span className="tracking-[-1.450px]">Recent</span>
          <span className="absolute bottom-[1px] left-0 h-[3px] w-[41px] bg-white" />
        </div>
        <span className="w-[69px]">Saved</span>
        <span className="mr-[33px] h-[25px] w-px bg-[#666]" />
        {navItems.map(([t, w]) => (
          <span key={t} className={w}>
            {t}
          </span>
        ))}
      </div>
      <div className="flex flex-1 overflow-hidden">
        {/* left pane */}
        <div className="flex w-[761px] shrink-0 pl-[23px]">
          <div className="w-[714px] pt-[18px]">
            <div className="relative flex h-[162px] flex-col items-center rounded bg-[#2d2d2d] pt-[36px] whitespace-nowrap">
              <div className="text-[26px] leading-[36px] tracking-[-0.85px] text-white">Let's start something new.</div>
              <div className="mt-[8px] text-[15px] leading-[21px] tracking-[-0.720px] text-[#f0f0f0]">
                Start with your own document settings or from a range of <span className="text-[#3f8fdc]">document presets</span>
              </div>
              <div className="text-[15px] leading-[21px] tracking-[-0.650px] text-[#f0f0f0]">to get working quickly.</div>
              <Svg w={14} h={14} cls="absolute top-[13px] right-[13px]">
                <path d="M1.500 1.500l11 11M12.500 1.500l-11 11" stroke="#b0b0b0" strokeWidth="2.200" />
              </Svg>
            </div>
            <div className="mt-[25px] flex h-[18px] items-center text-[12px] tracking-[-0.2px] whitespace-nowrap">
              <span className="w-[121px] font-medium text-[#dcdcdc]">YOUR RECENT ITEMS</span>
              <span className="tracking-[-0.6px] text-[#a3a3a3]">(21)</span>
            </div>
            <div className="mt-[15px] grid h-[255px] grid-cols-[repeat(4,168px)] content-start gap-[13px] overflow-hidden">
              <Card icon={<ClipIcon />} title="Clipboard" dims="1891 x 1060 px @ 72 ppi" on />
              <Card icon={<DocIcon />} title="Custom" dims="1891 x 500 px @ 72 ppi" />
              <Card icon={<DocIcon />} title="Custom" dims="1891 x 1060 px @ 72 ppi" />
              <Card icon={<DocIcon />} title="Custom" dims="297 x 210 mm @ 300 ppi" />
              <Card icon={<ShapesIcon />} title="" dims="" />
              <Card icon={<DocIcon />} title="" dims="" />
              <Card icon={<DocIcon />} title="" dims="" />
              <Card icon={<DocIcon />} title="" dims="" />
            </div>
            <div className="mt-[9px] flex h-[52px] items-center rounded bg-[#2d2d2d] pl-[177px]">
              <Svg w={18} h={17}>
                <circle cx="11" cy="7" r="6" stroke="#b5b5b5" strokeWidth="1.700" />
                <path d="M7 11l-6 5" stroke="#b5b5b5" strokeWidth="2.200" />
              </Svg>
              <div className="ml-[8px] flex h-[30px] w-[270px] items-center border-b border-[#444] text-[15px] tracking-[-0.780px] whitespace-nowrap text-[#8a8a8a] italic">
                Find templates on Adobe Stock
              </div>
              <div className="ml-[8px] flex h-8 w-[49px] items-center justify-center rounded-full border-2 border-[#9a9a9a] text-[15px] font-bold tracking-[-0.8px] text-[#b0b0b0]">
                Go
              </div>
            </div>
          </div>
          <div className="mt-[4px] ml-[14px] h-[485px] w-[5px] rounded-full bg-[#2f2f2f]">
            <div className="h-[188px] rounded-full bg-[#505050]" />
          </div>
        </div>
        {/* right pane */}
        <div className="flex flex-1 flex-col bg-[#323232] pt-[18px] pl-[20px] whitespace-nowrap">
          <Label>PRESET DETAILS</Label>
          <div className="flex h-[40px] items-center">
            <div className="flex h-full w-[231px] items-center border-b border-[#424242] pt-[13px] pb-[2px] text-[20px] tracking-[-1.200px] text-white">Untitled-3</div>
            <Svg w={22} h={16} cls="mt-px ml-[9px]">
              <path d="M0 8h6l5 5 5-5h6v7H0zM10 0h2.500v5H15l-4 5-4-5h3z" fill="#a8a8a8" />
            </Svg>
          </div>
          <div className="mt-[10px]">
            <Label>Width</Label>
          </div>
          <div className="mt-[3px] -mb-px flex">
            <Field v="1891" />
            <Select v="Pixels" w="w-[183px]" />
          </div>
          <div className="mt-[10px] flex">
            <Label w="w-[83px]">Height</Label>
            <Label w="w-[96px]">Orientation</Label>
            <Label>Artboards</Label>
          </div>
          <div className="mt-[3px] flex">
            <Field v="500" />
            <Svg w={24} h={28} cls="mt-[2px]">
              <rect x="1.500" y="1.500" width="20.500" height="25" stroke="#777" strokeWidth="2" />
              <g fill="#888">
                <circle cx="11.500" cy="7.500" r="2.700" />
                <path d="M7 22v-8c0-2 1-2.500 2-2.500h5c1 0 2 .5 2 2.500v8h-1.200v4H8.200v-4z" />
              </g>
            </Svg>
            <Svg w={28} h={24} cls="mt-[4px] ml-[18px]">
              <rect x="1.500" y="1.500" width="25" height="21" stroke="#46a0f5" strokeWidth="3" />
              <g fill="#46a0f5">
                <circle cx="14" cy="7" r="2.900" />
                <path d="M9 20v-7c0-2 1-2.500 2-2.500h6c1 0 2 .5 2 2.500v7h-1v3h-8v-3z" />
              </g>
            </Svg>
            <div className="mt-[7px] ml-[27px] h-4 w-4 rounded-[2px] border-2 border-[#777]" />
          </div>
          <div className="mt-[14px]">
            <Label>Resolution</Label>
          </div>
          <div className="mt-[3px] flex">
            <Field v="72" />
            <Select v="Pixels/Inch" w="w-[183px]" />
          </div>
          <div className="mt-[9px]">
            <Label>Color Mode</Label>
          </div>
          <div className="mt-[3px] flex gap-[10px]">
            <Select v="RGB Color" w="w-[164px]" />
            <Select v="8 bit" w="w-[92px]" />
          </div>
          <div className="mt-[9px]">
            <Label>Background Contents</Label>
          </div>
          <div className="mt-[3px] flex items-start gap-[12px]">
            <Select v="White" w="w-[192px]" />
            <div className="mt-[2px] h-[28px] w-[28px] rounded-[2px] bg-white" />
          </div>
          <div className="mt-[9px] flex items-center pl-[3px] text-[13px] leading-[18px] tracking-[-0.950px] text-[#a5a5a5]">
            <Svg w={6} h={10} cls="mr-[5px]">
              <path d="M.8.8 5 5 .8 9.200" stroke="#a5a5a5" strokeWidth="1.800" />
            </Svg>
            Advanced Options
          </div>
          <div className="mt-[104px] flex pl-[111px] text-[14px] font-bold tracking-[-0.650px]">
            <div className="mr-[19px] flex h-8 w-[73px] items-center justify-center rounded-full bg-[#1473e6] pb-[2px] text-white">Create</div>
            <div className="flex h-8 w-[66px] items-center justify-center rounded-full border-2 border-[#d0d0d0] pb-[2px] text-[#d8d8d8]">Close</div>
          </div>
        </div>
      </div>
    </div>
  </div>
);

/* ---------- taskbar ---------- */
const Chrome = () => (
  <>
    <circle cx="16" cy="16" r="15" fill="#fbc116" />
    <path d="M16 16 3 8.500A15 15 0 0 0 15 31l7.500-12z" fill="#2da94f" />
    <path d="M3 8.500A15 15 0 0 1 29 8.500H16z" fill="#e33b2e" />
    <circle cx="16" cy="16" r="7.500" fill="#fff" />
    <circle cx="16" cy="16" r="6" fill="#2f74e8" />
  </>
);
const Office = ({ l, dark, children }: { l: string; dark: string } & Kids) => (
  <>
    {children}
    <rect x="0" y="8" width="17" height="16" rx="1" fill={dark} />
    <text x="8.500" y="21" textAnchor="middle" fontSize="14" fontWeight="700" fill="#fff" fontFamily="Noto Sans">
      {l}
    </text>
  </>
);

const apps: { n: string; on?: boolean; d: React.ReactNode }[] = [
  { n: "chrome", d: <Chrome /> },
  {
    n: "ie",
    d: (
      <>
        <path d="M27 22c-2 4-6 6-10 6-7 0-11-5-11-11S10 6 17 6s11 4 11 11.500H11" stroke="#2e8fd0" strokeWidth="6" />
        <path d="M27 22c-2 4-6 6-10 6-7 0-11-5-11-11S10 6 17 6s11 4 11 11.500H11" stroke="#84d8fb" strokeWidth="4" />
        <path d="M28 9c1-6-3-8-9-5C10 9 2 20 2 27c0 4 4 4 8 2" stroke="#f7c830" strokeWidth="2.500" />
      </>
    ),
  },
  {
    n: "player",
    d: (
      <>
        <path d="M14 5h13v23H14z" fill="#8bbde0" stroke="#4d88b5" />
        <path d="M6 4h17v25H6z" fill="#b9d9ee" stroke="#5b95bf" />
        <circle cx="15" cy="16" r="8.500" fill="#f58220" />
        <path d="M12 10l9 6-9 6z" fill="#fff" />
      </>
    ),
  },
  {
    n: "excel",
    d: (
      <Office l="X" dark="#107c41">
        <path d="M8 2h12v14H8z" fill="#21a366" />
        <path d="M20 2h12v9H20z" fill="#33c481" />
        <path d="M20 11h12v6H20z" fill="#21a366" />
        <path d="M8 16h12v14H8z" fill="#185c37" />
        <path d="M20 17h12v6H20z" fill="#107c41" />
        <path d="M20 23h12v7H20z" fill="#185c37" />
      </Office>
    ),
  },
  {
    n: "onenote",
    d: (
      <Office l="N" dark="#7719aa">
        <path d="M8 2h24v28H8z" fill="#ca64ea" />
        <path d="M25 9h7v7h-7z" fill="#ae4bd5" />
        <path d="M25 16h7v7h-7z" fill="#9332bf" />
        <path d="M25 23h7v7h-7z" fill="#7719aa" />
      </Office>
    ),
  },
  {
    n: "visio",
    d: (
      <Office l="V" dark="#185abd">
        <path d="M17 0l13 13-13 9L8 9z" fill="#41a5ee" />
        <path d="M19 12h11v4l-9 8z" fill="#2b7cd3" />
        <circle cx="17" cy="23" r="7" fill="#1a4aa0" />
      </Office>
    ),
  },
  {
    n: "explorer",
    d: (
      <>
        <path d="M2 3h10l2 3h14v22H2z" fill="#e8cf7a" stroke="#c0a048" />
        <path d="M4 8h26v21H4z" fill="#f8eaa8" stroke="#cdb05a" />
        <path d="M4 3h4v3H4z" fill="#3b9d48" />
        <path d="M12 5h4v3h-4z" fill="#c43" />
        <path d="M19 7h5v3h-5z" fill="#3a78d0" />
        <path d="M7 21c0-2 1-3 3-3h13c2 0 3 1 3 3v10h-4v-8H11v8H7z" fill="#9bd4ee" stroke="#5aa7cf" />
      </>
    ),
  },
  {
    n: "outlook",
    d: (
      <Office l="O" dark="#0a5fb4">
        <path d="M10 2h19v16H10z" fill="#0f78d4" />
        <path d="M16 2h7v8h-7z" fill="#1490df" />
        <path d="M23 2h6v8h-6z" fill="#28a8ea" />
        <path d="M23 10h6v6h-6z" fill="#50d9ff" />
        <path d="M8 16h24v14H8z" fill="#28a8ea" />
        <path d="M32 16 17 25l15 5z" fill="#1066b8" />
      </Office>
    ),
  },
  {
    n: "word",
    on: true,
    d: (
      <Office l="W" dark="#185abd">
        <path d="M8 2h24v7H8z" fill="#41a5ee" />
        <path d="M8 9h24v7H8z" fill="#2b7cd3" />
        <path d="M8 16h24v7H8z" fill="#185abd" />
        <path d="M8 23h24v7H8z" fill="#103f91" />
      </Office>
    ),
  },
  {
    n: "opera",
    d: (
      <>
        <ellipse cx="16" cy="16" rx="12" ry="12" stroke="#c4101c" strokeWidth="5.500" />
        <path d="M17 4a12 12 0 0 1 0 24" stroke="#f23a45" strokeWidth="5" />
      </>
    ),
  },
  {
    n: "chrome-profile",
    on: true,
    d: (
      <>
        <Chrome />
        <circle cx="24" cy="24" r="8" fill="#74b266" />
        <circle cx="24" cy="21.500" r="2.600" fill="#1c2e1a" />
        <path d="M19 28c0-5 10-5 10 0z" fill="#1c2e1a" />
      </>
    ),
  },
  {
    n: "photoshop",
    on: true,
    d: (
      <>
        <rect x="2.500" y="2" width="27" height="27" fill="#061d28" stroke="#00c8ff" strokeWidth="2" />
        <text x="16" y="20.500" textAnchor="middle" fontSize="15" fontWeight="600" fill="#00c8ff" fontFamily="Noto Sans">
          Ps
        </text>
      </>
    ),
  },
];

const Taskbar = () => (
  <div className="relative flex h-[40px] shrink-0 items-center border-t border-[#123] bg-[linear-gradient(50deg,transparent_68%,rgba(150,205,245,.4)_69.300%,transparent_70%,transparent_70.500%,rgba(120,180,230,.2)_71%,transparent_72%),linear-gradient(to_right,#1b5f9c_0%,#2f7fb8_3%,#2489c4_5%,#3292cb_12%,#3a9bd2_25%,#48a3d6_40%,#3c96cf_52%,#2a7bbf_62%,#1f63ab_72%,#1e5da6_80%,#2462a4_83.500%,#1a4a80_86.500%,#143a69_92%,#12386a_100%)] shadow-[inset_0_1px_0_#8fc0dd]">
    <div className="flex w-[58px] justify-center pr-[3px]">
      <Svg w={38} h={38} vb="0 0 38 38">
        <circle cx="19" cy="19" r="17.500" fill="#1b4f80" stroke="#8db4d0" />
        <ellipse cx="19" cy="11" rx="14" ry="9" fill="#8fa9bd" opacity=".7" />
        <path d="M10 12c3-2 6-2 9 0l-2 7c-3-2-6-2-9 0z" fill="#e8572a" />
        <path d="M20.500 12.500c3 2 6 2 9 0l-2 7c-3 2-6 2-9 0z" fill="#8cc63f" />
        <path d="M7.500 20.500c3-2 6-2 9 0l-2 7c-3-2-6-2-9 0z" fill="#3fa9f5" />
        <path d="M18 21c3 2 6 2 9 0l-2 7c-3 2-6 2-9 0z" fill="#fdc82f" />
      </Svg>
    </div>
    {apps.map((a) => (
      <div key={a.n} className="flex h-full w-[62px] items-center justify-center">
        <div
          className={
            "flex h-[38px] w-[58px] items-center justify-center rounded-[3px] " +
            (a.on ? "border border-white/60 bg-[linear-gradient(135deg,rgba(255,255,255,.65),rgba(255,255,255,.25)_50%,rgba(255,255,255,.35))]" : "")
          }
        >
          <Svg w={32} h={32}>
            {a.d}
          </Svg>
        </div>
      </div>
    ))}
    <div className="ml-auto flex h-full items-center text-[12px] tracking-[-0.3px] whitespace-nowrap text-white">
      <span className="w-[32px] pb-[4px]">TH</span>
      <Svg w={8} h={4} cls="mt-[3px]">
        <path d="M4 0l4 4H0z" fill="#fff" />
      </Svg>
      <Svg w={64} h={16} cls="mt-px ml-[13px]">
        <path d="M1.500 1v14" stroke="#fff" strokeWidth="1.500" />
        <path d="M3 2c3-1 4 1 8 0v7c-4 1-5-1-8 0z" fill="#fff" />
        <circle cx="11" cy="11" r="4.500" fill="#d6342a" />
        <path d="M9 9l4 4M13 9l-4 4" stroke="#fff" strokeWidth="1.400" />
        <path d="M27 5h3l4-4v14l-4-4h-3z" fill="#fff" />
        <path d="M36 5c1 2 1 4 0 6" stroke="#cde" strokeWidth="1.300" />
        <path d="M51.500 4.500h11v7h-11zM57 12v2M53 14.500h8" stroke="#fff" strokeWidth="1.400" />
        <path d="M49 1v3h4V1M51 4v10" stroke="#fff" strokeWidth="1.300" />
      </Svg>
      <div className="ml-[11px] flex w-[60px] flex-col items-center pt-[2px] leading-[17px]">
        <span>9:37</span>
        <span className="tracking-[-0.4px]">27/11/2566</span>
      </div>
      <div className="ml-[5px] h-full w-[13px] border border-[#0c2448] bg-[linear-gradient(135deg,#8fa8c0,#24456e_50%,#1a3a66)]" />
    </div>
  </div>
);

export default function App() {
  return (
    <div className="relative flex h-[1079px] w-[1919px] flex-col overflow-hidden bg-[#535353] [font-family:'Noto_Sans','Open_Sans',sans-serif]">
      <MenuBar />
      <OptionsBar />
      <div className="flex h-[976px] shrink-0">
        <DocumentArea />
        <IconDock />
        <PanelDock />
        <LearnDock />
      </div>
      <Taskbar />
      <Toolbar />
      <Dialog />
    </div>
  );
}
